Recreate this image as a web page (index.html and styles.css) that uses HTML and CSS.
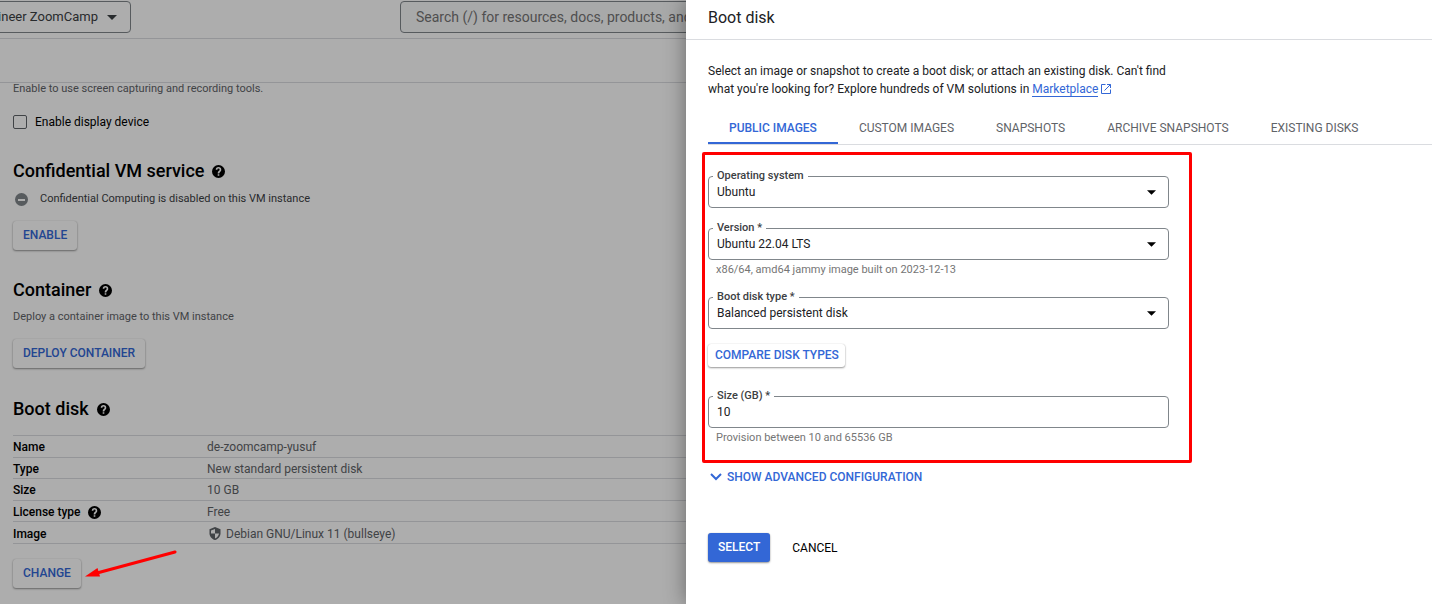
FILE: index.html
```html
<!DOCTYPE html>
<html lang="en">
<head>
<meta charset="utf-8">
<meta name="viewport" content="width=device-width, initial-scale=1">
<title>Create an instance – Boot disk</title>
<link rel="stylesheet" href="styles.css">
</head>
<body>
<svg class="sprite" aria-hidden="true">
  <symbol id="help" viewBox="0 0 24 24"><path fill="currentColor" d="M12 0a12 12 0 1 0 0 24 12 12 0 0 0 0-24zm1.5 20h-3v-3h3v3zm2.6-8.3-1.1 1.1c-1 1-1.5 1.6-1.5 2.9h-3v-.7c0-1.300.500-2.400 1.400-3.300l1.500-1.500c.500-.400.700-1 .700-1.600a2.100 2.100 0 0 0-4.200 0H6.900a5.100 5.100 0 0 1 10.200 0c0 1.200-.400 2.300-1 3.100z"/></symbol>
  <symbol id="caret" viewBox="0 0 10 5"><path fill="currentColor" d="M0 0h10L5 5z"/></symbol>
</svg>

<div class="page">
  <header class="topbar">
    <div class="project">
      <button class="project-picker" type="button">Data Engineer ZoomCamp
        <svg class="picker-caret"><use href="#caret"/></svg>
      </button>
    </div>
    <input class="search" type="search" aria-label="Search" placeholder="Search (/) for resources, docs, products, and more">
  </header>
  <div class="subbar"></div>

  <main class="content">
    <p class="note">Enable to use screen capturing and recording tools.</p>
    <label class="check"><input type="checkbox">Enable display device</label>

    <section class="block">
      <h2 class="title">Confidential VM service <svg class="help"><use href="#help"/></svg></h2>
      <p class="status">
        <svg class="status-icon" viewBox="0 0 13 13"><circle cx="6.500" cy="6.500" r="6.500" fill="#80868b"/><path fill="#fff" d="M3 6h7v2H3z"/></svg>
        Confidential Computing is disabled on this VM instance
      </p>
      <button class="btn" type="button">ENABLE</button>
    </section>

    <section class="block">
      <h2 class="title">Container <svg class="help"><use href="#help"/></svg></h2>
      <p class="note note-block">Deploy a container image to this VM instance</p>
      <button class="btn" type="button">DEPLOY CONTAINER</button>
    </section>

    <section class="block disk">
      <h2 class="title">Boot disk <svg class="help"><use href="#help"/></svg></h2>
      <table class="props">
        <tr><th scope="row">Name</th><td>de-zoomcamp-yusuf</td></tr>
        <tr><th scope="row">Type</th><td>New standard persistent disk</td></tr>
        <tr><th scope="row">Size</th><td>10 GB</td></tr>
        <tr><th scope="row"><span class="cell">License type <svg class="help"><use href="#help"/></svg></span></th><td>Free</td></tr>
        <tr><th scope="row">Image</th><td><span class="cell image-cell"><svg class="shield" viewBox="0 0 12 13"><path fill="#5f6368" d="M6 0 .5 2.200v4C.500 9.300 2.800 12.200 6 13c3.200-.800 5.500-3.700 5.500-6.800v-4z"/><path fill="#fff" d="M6 2v4.500h4c-.300 2.200-1.900 4.200-4 4.900V6.500H2V3.500z"/></svg>Debian GNU/Linux 11 (bullseye)</span></td></tr>
      </table>
      <div class="change">
        <button class="btn" type="button">CHANGE</button>
        <svg class="arrow" viewBox="0 0 92 28" aria-hidden="true"><path d="M90 2 12 23" stroke="#f00" stroke-width="3" stroke-linecap="round"/><path fill="#f00" d="M0 26.500 12.500 18l2.500 8.500z"/></svg>
      </div>
    </section>
  </main>
</div>

<div class="scrim"></div>

<aside class="drawer" aria-label="Boot disk">
  <header class="drawer-head"><h1>Boot disk</h1></header>
  <div class="drawer-body">
    <p class="intro">Select an image or snapshot to create a boot disk; or attach an existing disk. Can't find what you're looking for? Explore hundreds of VM solutions in <a href="#marketplace">Marketplace</a>
      <svg class="external" viewBox="0 0 10 10"><path fill="none" stroke="#3367d6" d="M4.500.500h-4v9h9v-4M6 .5h3.500V4M9.500.500 3.500 6.500"/></svg></p>
    <nav class="tabs" role="tablist">
      <button class="tab active" type="button" role="tab" aria-selected="true">PUBLIC IMAGES</button>
      <button class="tab" type="button" role="tab">CUSTOM IMAGES</button>
      <button class="tab" type="button" role="tab">SNAPSHOTS</button>
      <button class="tab" type="button" role="tab">ARCHIVE SNAPSHOTS</button>
      <button class="tab" type="button" role="tab">EXISTING DISKS</button>
    </nav>

    <form class="form">
      <div class="fields">
        <div class="field">
          <label for="os">Operating system</label>
          <select id="os"><option>Ubuntu</option></select>
          <svg class="caret"><use href="#caret"/></svg>
        </div>
        <div class="field">
          <label for="version">Version *</label>
          <select id="version"><option>Ubuntu 22.04 LTS</option></select>
          <svg class="caret"><use href="#caret"/></svg>
        </div>
        <p class="hint">x86/64, amd64 jammy image built on 2023-12-13</p>
        <div class="field">
          <label for="type">Boot disk type *</label>
          <select id="type"><option>Balanced persistent disk</option></select>
          <svg class="caret"><use href="#caret"/></svg>
        </div>
        <button class="btn compare" type="button">COMPARE DISK TYPES</button>
        <div class="field">
          <label for="size">Size (GB) *</label>
          <input id="size" type="text" value="10">
        </div>
        <p class="hint">Provision between 10 and 65536 GB</p>
      </div>
      <button class="advanced" type="button"><svg class="chevron" viewBox="0 0 12 8"><path d="m1 1 5 5 5-5" fill="none" stroke="currentColor" stroke-width="2"/></svg>SHOW ADVANCED CONFIGURATION</button>
      <div class="actions">
        <button class="btn primary" type="submit">SELECT</button>
        <button class="cancel" type="button">CANCEL</button>
      </div>
    </form>
  </div>
</aside>
</body>
</html>
```

FILE: styles.css
```css
* { box-sizing: border-box; }
body {
  margin: 0;
  height: 100vh;
  overflow: hidden;
  position: relative;
  font: 12px/18px Roboto, "Liberation Sans", sans-serif;
  color: #000;
  background: #fff;
}
button, input, select { font: inherit; color: inherit; }
button { border: 0; background: none; padding: 0; white-space: nowrap; }
h1, h2, p { margin: 0; }
.sprite { display: none; }
svg { flex: none; }

/* Page under the drawer */
.topbar {
  display: flex;
  align-items: flex-start;
  gap: 269px;
  height: 39px;
  padding-top: 1px;
  border-bottom: 1px solid #dadce0;
}
.project {
  display: flex;
  justify-content: flex-end;
  width: 131px;
  overflow: hidden;
}
.project-picker {
  display: flex;
  align-items: center;
  gap: 9px;
  height: 32px;
  padding: 0 13px;
  border: 1px solid #80868b;
  border-radius: 4px;
  font-size: 13px;
  color: #3c4043;
  flex: none;
}
.picker-caret { width: 10px; height: 5px; }
.search {
  flex: 1;
  height: 32px;
  padding: 0 15px;
  border: 1px solid #80868b;
  border-radius: 4px;
  background: #f8f9fa;
  font-size: 14px;
}
.search::placeholder { color: #757575; opacity: 1; }
.subbar { height: 44px; border-bottom: 1px solid #dadce0; }
.content { padding: 0 13px; }
.note { font-size: 11px; line-height: 12px; color: #5f6368; }
.check {
  display: flex;
  align-items: center;
  gap: 8px;
  height: 18px;
  margin-top: 18px;
}
.check input {
  appearance: none;
  width: 14px;
  height: 14px;
  margin: 0;
  border: 1px solid #5f6368;
  border-radius: 2px;
}
.block { margin-top: 28px; }
.disk { margin-top: 29px; }
.title {
  display: flex;
  align-items: center;
  gap: 8px;
  font-size: 18px;
  line-height: 24px;
  font-weight: 500;
}
.help { width: 13px; height: 13px; }
.status {
  display: flex;
  align-items: center;
  gap: 12px;
  margin: 7px 0 13px 2px;
  font-size: 11px;
  color: #3c4043;
}
.status-icon { width: 13px; height: 13px; }
.btn {
  height: 29px;
  padding: 0 10px 2px;
  border-radius: 3px;
  background: #fff;
  color: #3367d6;
  font-weight: 500;
  box-shadow: 0 1px 2px rgba(0, 0, 0, .4), 0 0 1px rgba(0, 0, 0, .2);
}
.note-block { margin: 9px 0 16px; }
.props {
  width: 100%;
  height: 109px;
  margin-top: 14px;
  border-collapse: collapse;
  line-height: 18px;
}
.props th, .props td {
  padding: 2px 0 0;
  border: solid #dadce0;
  border-width: 1px 0;
  text-align: left;
  font-weight: 400;
}
.props th { width: 194px; font-weight: 500; }
.props td { color: #5f6368; }
.cell { display: flex; align-items: center; gap: 7px; }
.image-cell { gap: 5px; padding-left: 2px; }
.shield { width: 12px; height: 13px; }
.change { display: inline-block; position: relative; margin-top: 15px; }
.arrow { position: absolute; left: 72px; top: -9px; z-index: 1; width: 92px; height: 28px; }

.scrim { position: absolute; inset: 0; background: rgba(0, 0, 0, .32); }

/* Drawer */
.drawer {
  position: absolute;
  top: 0;
  right: 0;
  bottom: 0;
  width: 746px;
  max-width: 100%;
  background: #fff;
  color: #202124;
  box-shadow: 0 0 20px rgba(0, 0, 0, .4);
}
.drawer-head { padding: 6px 22px 9px; border-bottom: 1px solid #dadce0; }
.drawer-head h1 { font-size: 16px; line-height: 24px; font-weight: 400; }
.drawer-body { padding: 22px 0 0 22px; }
.intro { max-width: 460px; }
.intro a { color: #3367d6; text-decoration: none; border-bottom: 1px solid #3367d6; }
.external { width: 10px; height: 10px; vertical-align: -1px; }
.tabs { display: flex; margin-top: 14px; border-bottom: 1px solid #dadce0; }
.tab { height: 32px; padding: 0 21px; color: #5f6368; }
.tab.active { color: #3367d6; font-weight: 500; border-bottom: 2px solid #3367d6; padding-top: 2px; }
.form { width: 461px; max-width: 100%; }
.fields { position: relative; padding-top: 31px; }
.fields::after {
  content: "";
  position: absolute;
  inset: 7px -23px -19px -6px;
  border: 3px solid #f00;
  border-radius: 2px;
  pointer-events: none;
}
.field { position: relative; margin-bottom: 20px; }
.field label {
  position: absolute;
  left: 5px;
  top: -6px;
  padding: 0 4px;
  background: #fff;
  font-size: 11px;
  line-height: 12px;
  font-weight: 500;
  color: #3c4043;
}
.field select, .field input {
  display: block;
  appearance: none;
  width: 100%;
  height: 32px;
  padding: 0 8px;
  border: 1px solid #80868b;
  border-radius: 4px;
  background: none;
}
.caret { position: absolute; right: 13px; top: 14px; width: 9px; height: 5px; color: #000; }
.hint {
  margin: -16px 0 21px;
  padding-left: 8px;
  font-size: 11px;
  line-height: 12px;
  color: #757575;
}
.hint:last-child { margin-bottom: 0; }
.compare { display: block; height: 23px; margin: -5px 0 29px; padding: 0 6px 2px 7px; }
.advanced {
  display: flex;
  align-items: center;
  gap: 5px;
  margin-top: 24px;
  padding-left: 2px;
  color: #3367d6;
  font-weight: 500;
}
.chevron { width: 12px; height: 8px; }
.actions { display: flex; gap: 22px; margin-top: 47px; }
.primary { background: #3367d6; color: #fff; }
.cancel { color: #000; }
```
